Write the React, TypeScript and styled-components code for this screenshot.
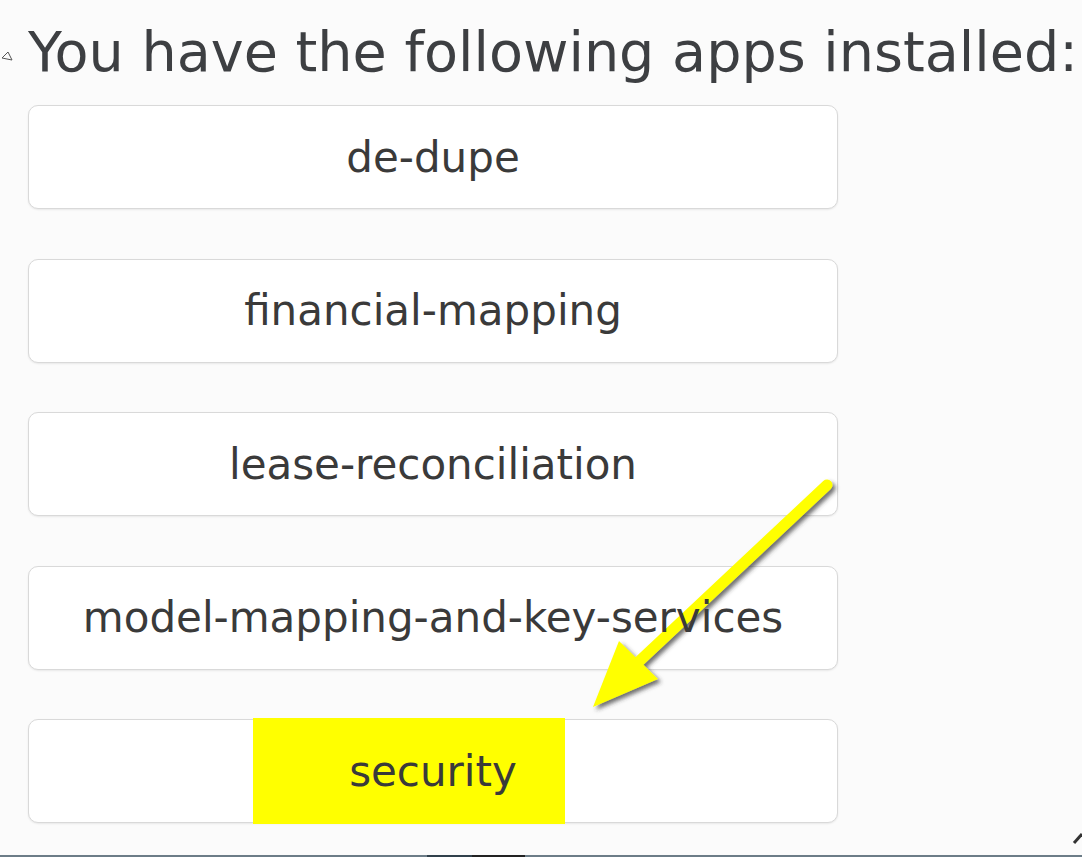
import styled, { createGlobalStyle } from 'styled-components'

const GlobalStyle = createGlobalStyle`
  html, body {
    margin: 0;
    padding: 0;
    background: #fbfbfb;
  }
  body {
    font-family: "DejaVu Sans", Verdana, sans-serif;
  }
`

const Page = styled.div`
  position: relative;
  width: 1082px;
  height: 857px;
  overflow: hidden;
  display: flex;
  flex-direction: column;
  background: #fbfbfb;
`

const Content = styled.div`
  flex: 1;
  padding: 19px 0 0 28px;
`

const Heading = styled.h1`
  margin: 0 0 21px 0;
  font-size: 55.6px;
  font-weight: normal;
  line-height: normal;
  color: #3d3f42;
  white-space: nowrap;
`

const AppList = styled.div`
  display: flex;
  flex-direction: column;
  gap: 49.5px;
  width: 810px;
`

const AppButton = styled.div`
  position: relative;
  height: 104px;
  box-sizing: border-box;
  display: flex;
  align-items: center;
  justify-content: center;
  background: #fff;
  border: 1.5px solid #d9d9d9;
  border-radius: 10px;
  box-shadow: 0 1px 2px rgba(0, 0, 0, 0.08);
  font-size: 42px;
  color: #3a3a3a;
`

const Label = styled.span`
  position: relative;
  z-index: 1;
`

const Highlight = styled.div`
  position: absolute;
  top: -2px;
  bottom: -2px;
  left: 224px;
  width: 312px;
  background: #ffff00;
`

const Overlay = styled.svg`
  position: absolute;
  left: 0;
  top: 0;
  pointer-events: none;
`

const BottomBar = styled.div`
  height: 2px;
  background: linear-gradient(
    to right,
    #6c7c87 0,
    #6c7c87 427px,
    #30404b 427px,
    #30404b 472px,
    #222 472px,
    #222 525px,
    #6c7c87 525px
  );
`

const apps = [
  'de-dupe',
  'financial-mapping',
  'lease-reconciliation',
  'model-mapping-and-key-services',
  'security',
]

function App() {
  return (
    <Page>
      <GlobalStyle />
      <Content>
        <Heading>You have the following apps installed:</Heading>
        <AppList>
          {apps.map((name) => (
            <AppButton key={name}>
              {name === 'security' && <Highlight />}
              <Label>{name}</Label>
            </AppButton>
          ))}
        </AppList>
      </Content>
      <BottomBar />
      <Overlay width="1082" height="857" viewBox="0 0 1082 857">
        <defs>
          <filter id="shadow" x="-20%" y="-20%" width="140%" height="140%">
            <feDropShadow dx="3" dy="3" stdDeviation="2" floodColor="#333" floodOpacity="0.7" />
          </filter>
        </defs>
        <g filter="url(#shadow)">
          <line x1="827" y1="485" x2="632" y2="668" stroke="#ffff00" strokeWidth="11" strokeLinecap="round" />
          <polygon points="593,707 619,641 658,679" fill="#ffff00" />
        </g>
        <path d="M2 58 L8 52 L12 60 Z" fill="none" stroke="#555" strokeWidth="1" />
        <line x1="1074" y1="843" x2="1082" y2="834" stroke="#333" strokeWidth="3" />
      </Overlay>
    </Page>
  )
}

export default App
